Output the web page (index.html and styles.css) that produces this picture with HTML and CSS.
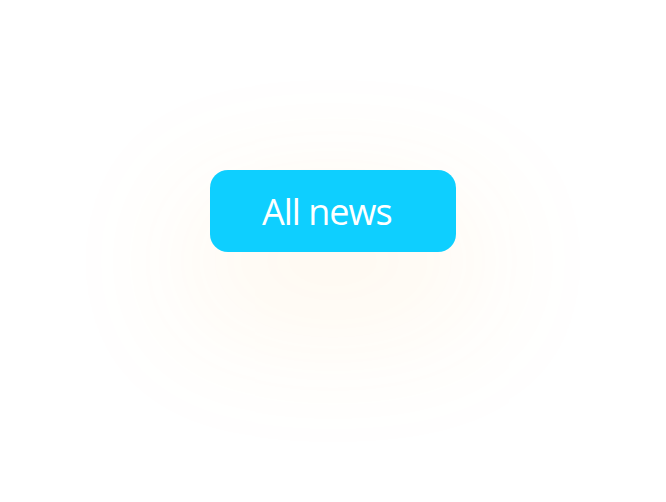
FILE: index.html
```html
<!DOCTYPE html>
<html lang="en">
<head>
  <meta charset="UTF-8" />
  <meta name="viewport" content="width=device-width, initial-scale=1.0" />
  <title>All news</title>
  <link rel="stylesheet" href="styles.css">
</head>
<body>
  <div class="container">
    <a class="news-button" href="#">All news</a>
  </div>
</body>
</html>
```

FILE: styles.css
```css
html, body {
  margin: 0;
  padding: 0;
  height: 100%;
}
body {
  background: #ffffff;
  font-family: "Open Sans", "Noto Sans", Arial, sans-serif;
  overflow: hidden;
}
.container {
  display: flex;
  justify-content: center;
  padding-top: 170px;
}
.news-button {
  display: flex;
  align-items: center;
  box-sizing: border-box;
  width: 246px;
  height: 82px;
  padding: 0 0 0 52px;
  background-color: #0ecfff;
  color: white;
  font-size: 36px;
  letter-spacing: -1px;
  text-decoration: none;
  border-radius: 18px;
  box-shadow: 0 50px 140px 20px rgba(255, 175, 60, 0.1);
}
```
